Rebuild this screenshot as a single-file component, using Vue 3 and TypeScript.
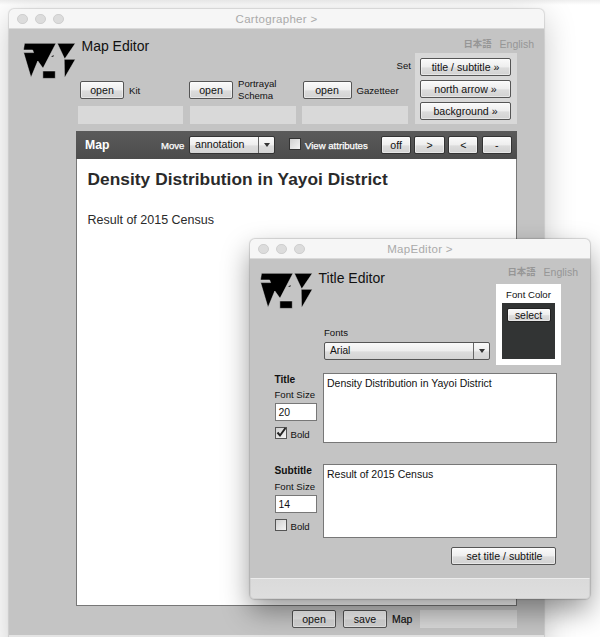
<script setup lang="ts">
import { ref } from 'vue'

interface Source {
  name: string
  lines: string[]
}

interface TextBlock {
  key: string
  heading: string
  size: string
  bold: boolean
  text: string
}

const sources: Source[] = [
  { name: 'kit', lines: ['Kit'] },
  { name: 'schema', lines: ['Portrayal', 'Schema'] },
  { name: 'gazetteer', lines: ['Gazetteer'] },
]
const setters: string[] = ['title / subtitle »', 'north arrow »', 'background »']
const zoomKeys: string[] = ['off', '>', '<', '-']

const blocks = ref<TextBlock[]>([
  { key: 'title', heading: 'Title', size: '20', bold: true, text: 'Density Distribution in Yayoi District' },
  { key: 'subtitle', heading: 'Subtitle', size: '14', bold: false, text: 'Result of 2015 Census' },
])
</script>

<template>
  <div class="desktop">
    <section class="window main-window">
      <header class="titlebar">
        <i class="dot"></i><i class="dot"></i><i class="dot"></i>
        <span class="window-name">Cartographer &gt;</span>
      </header>

      <div class="main-head">
        <svg class="logo" width="53" height="36" viewBox="0 0 53 36">
          <g stroke="#dcdcdc" stroke-width=".5">
            <path d="M1.5.3H33L20 25.3 14.8 18 8 34.5.6 9.6H10.6L9.6 7H.4Z" />
            <path d="M34.3.3H52.4L41.7 16Z" />
            <path d="M41.2 16.3H52.4L41.5 35Z" />
            <path d="M19.8 28H32.3V35.4H19.8Z" />
          </g>
          <path d="M28 14L30.5 12V13.5Z" />
        </svg>
        <div class="center">
          <div class="center-top">
            <h1>Map Editor</h1>
            <span class="set-label">Set</span>
          </div>
          <div class="sources">
            <div v-for="s in sources" :key="s.name" class="source" :class="s.name">
              <div class="source-row">
                <button class="btn open">open</button>
                <div class="label">
                  <div v-for="l in s.lines" :key="l">{{ l }}</div>
                </div>
              </div>
              <div class="field"></div>
            </div>
          </div>
        </div>
        <div class="side">
          <nav class="langs"><span class="ja">日本語</span><span>English</span></nav>
          <div class="setters">
            <button v-for="s in setters" :key="s" class="btn">{{ s }}</button>
          </div>
        </div>
      </div>

      <div class="map">
        <div class="toolbar">
          <strong>Map</strong>
          <span class="move">Move</span>
          <div class="select annotation">
            <span>annotation</span>
            <span class="arrow"></span>
          </div>
          <span class="check"></span>
          <span class="view">View attributes</span>
          <div class="keys">
            <button v-for="k in zoomKeys" :key="k" class="btn">{{ k }}</button>
          </div>
        </div>
        <div class="canvas">
          <h2>{{ blocks[0].text }}</h2>
          <p>{{ blocks[1].text }}</p>
        </div>
      </div>

      <div class="main-foot">
        <button class="btn">open</button>
        <button class="btn">save</button>
        <span>Map</span>
        <div class="field"></div>
      </div>
      <div class="grip"></div>
    </section>

    <section class="window dialog">
      <header class="titlebar">
        <i class="dot"></i><i class="dot"></i><i class="dot"></i>
        <span class="window-name">MapEditor &gt;</span>
      </header>

      <div class="dialog-head">
        <svg class="logo" width="53" height="36" viewBox="0 0 53 36">
          <g stroke="#dcdcdc" stroke-width=".5">
            <path d="M1.5.3H33L20 25.3 14.8 18 8 34.5.6 9.6H10.6L9.6 7H.4Z" />
            <path d="M34.3.3H52.4L41.7 16Z" />
            <path d="M41.2 16.3H52.4L41.5 35Z" />
            <path d="M19.8 28H32.3V35.4H19.8Z" />
          </g>
          <path d="M28 14L30.5 12V13.5Z" />
        </svg>
        <div class="dialog-center">
          <h1>Title Editor</h1>
          <div class="fonts-label">Fonts</div>
          <div class="select fonts">
            <span>Arial</span>
            <span class="arrow"></span>
          </div>
        </div>
        <div class="dialog-side">
          <nav class="langs"><span class="ja">日本語</span><span>English</span></nav>
          <div class="color-card">
            <span>Font Color</span>
            <div class="swatch"><button class="btn">select</button></div>
          </div>
        </div>
      </div>

      <div v-for="b in blocks" :key="b.key" class="block" :class="b.key">
        <div class="block-side">
          <strong>{{ b.heading }}</strong>
          <span class="size-label">Font Size</span>
          <div class="size">{{ b.size }}</div>
          <div class="bold-row" @click="b.bold = !b.bold">
            <span class="check">
              <svg v-if="b.bold" width="13" height="13" viewBox="0 0 13 13">
                <path d="M2.5 5.5L5 8.5 10.5 1" fill="none" stroke="#222" stroke-width="2" />
              </svg>
            </span>
            <span>Bold</span>
          </div>
        </div>
        <div class="area">{{ b.text }}</div>
      </div>

      <div class="dialog-actions"><button class="btn">set title / subtitle</button></div>
      <footer class="statusbar"></footer>
    </section>
  </div>
</template>

<style>
body {
  overflow: hidden;
}
</style>

<style scoped>
* {
  box-sizing: border-box;
}
.desktop {
  position: relative;
  width: 600px;
  height: 637px;
  overflow: hidden;
  background: linear-gradient(#eee, #fff 5px);
  font-family: 'Liberation Sans', 'Noto Sans CJK JP', sans-serif;
  font-size: 9.6px;
  color: #111;
}
.window {
  position: absolute;
  display: flex;
  flex-direction: column;
  background: #c4c4c4;
  border-radius: 5px;
}
.main-window {
  left: 9px;
  top: 9px;
  width: 535px;
  height: 640px;
  box-shadow: 0 0 1px 1px rgba(0, 0, 0, 0.11), 0 8px 32px rgba(0, 0, 0, 0.22);
}
.dialog {
  left: 250px;
  top: 239px;
  width: 340px;
  height: 360px;
  box-shadow: 0 0 1px 1px rgba(0, 0, 0, 0.14), 0 12px 28px rgba(0, 0, 0, 0.4);
}
.titlebar {
  display: flex;
  align-items: center;
  flex: none;
  height: 20px;
  padding: 1px 0 0 8px;
  gap: 7.5px;
  background: #f6f6f6;
  border-bottom: 1px solid #dadada;
  border-radius: 5px 5px 0 0;
}
.dot {
  width: 10.5px;
  height: 10.5px;
  border: 1px solid #cfcfcf;
  border-radius: 50%;
  background: #dcdcdc;
}
.window-name {
  flex: 1;
  padding-right: 62px;
  text-align: center;
  font-size: 11.5px;
  letter-spacing: 0.3px;
  color: #aaa;
}
h1 {
  margin: 0;
  font-size: 14px;
  font-weight: 400;
  line-height: 16px;
  color: #111;
}
.btn {
  display: flex;
  align-items: center;
  justify-content: center;
  flex: none;
  height: 18px;
  padding: 0;
  border: 1px solid #555;
  border-radius: 2px;
  background: linear-gradient(#fafafa, #eee 50%, #dcdcdc 55%, #d2d2d2);
  box-shadow: inset 0 0 0 1px rgba(255, 255, 255, 0.45);
  font: 10.6px/14px 'Liberation Sans', sans-serif;
  color: #111;
}
.field {
  height: 18px;
  background: #d9d9d9;
}
.logo {
  flex: none;
}
.langs {
  display: flex;
  align-items: center;
  gap: 8px;
  height: 12px;
  font-size: 10.5px;
  line-height: 12px;
  color: #969696;
}
.ja {
  font-size: 9.4px;
  font-weight: 700;
}

/* main window header */
.main-head {
  display: flex;
  height: 102px;
  padding-left: 14px;
  flex: none;
}
.main-head .logo {
  margin: 14px 2px 0 0;
}
.center {
  width: 330px;
}
.center-top {
  display: flex;
  justify-content: space-between;
  height: 52px;
}
.center-top h1 {
  margin: 9px 0 0 3.5px;
}
.set-label {
  margin: 31px -3px 0 0;
  line-height: 12px;
}
.sources {
  display: grid;
  grid-template-columns: 105px 106px 106px;
  column-gap: 6.5px;
}
.source-row {
  display: flex;
  align-items: center;
  height: 18px;
  margin-bottom: 7px;
  gap: 5px;
}
.open {
  width: 44px;
  margin-left: 2px;
}
.schema .open {
  margin-left: -0.5px;
}
.gazetteer .open {
  width: 49px;
  margin-left: 0.5px;
}
.label {
  line-height: 12px;
}
.kit .label,
.gazetteer .label {
  padding-top: 2px;
}
.side {
  display: flex;
  flex-direction: column;
  align-items: flex-end;
  width: 126px;
  padding-top: 9px;
}
.setters {
  display: flex;
  flex-direction: column;
  gap: 4px;
  width: 102px;
  height: 71px;
  margin: 3px 17px 0 0;
  padding: 5px;
  background: #d8d8d8;
}
.setters .btn {
  width: 91px;
}

/* map panel */
.map {
  display: flex;
  flex-direction: column;
  width: 441px;
  height: 475px;
  margin-left: 67px;
  flex: none;
  border: 1px solid #777;
  background: #fff;
}
.toolbar {
  display: flex;
  align-items: center;
  height: 28px;
  margin: -1px -1px 0;
  padding: 0 5px 0 9px;
  flex: none;
  background: linear-gradient(#5a5a5a, #4c4c4c);
  color: #fff;
}
.toolbar strong {
  width: 76px;
  font-size: 12.2px;
}
.move {
  width: 28px;
}
.move,
.view {
  -webkit-text-stroke: 0.25px #fff;
}
.select {
  display: flex;
  height: 18px;
  border: 1px solid #555;
  border-radius: 2px;
  background: linear-gradient(#fafafa, #eee 50%, #dcdcdc 55%, #d4d4d4);
  font-size: 10.6px;
  line-height: 15px;
  color: #111;
}
.select > span:first-child {
  flex: 1;
  padding-left: 5px;
}
.arrow {
  display: flex;
  align-items: center;
  justify-content: center;
  width: 16px;
  border-left: 1px solid #666;
}
.arrow::before {
  content: '';
  border: 3.5px solid transparent;
  border-top: 4px solid #333;
  border-bottom: 0;
}
.annotation {
  width: 86px;
  margin-right: 14px;
  border-color: #333;
}
.check {
  display: block;
  flex: none;
  width: 12px;
  height: 12px;
  border: 1px solid #555;
  background: linear-gradient(135deg, #d0d0d0, #f4f4f4);
}
.check svg {
  display: block;
  margin: -1px;
  overflow: visible;
}
.toolbar .check {
  margin: -2px 4px 0 0;
  border-color: #333;
}
.keys {
  display: flex;
  gap: 3.2px;
  margin-left: auto;
}
.keys .btn {
  width: 30.4px;
  border-color: #333;
}
.canvas {
  padding: 10px 10.5px;
  color: #2a2a2a;
}
.canvas h2 {
  margin: 0;
  font-size: 17.3px;
  line-height: 20px;
  letter-spacing: 0.05px;
  white-space: nowrap;
}
.canvas p {
  margin: 24px 0 0;
  font-size: 12.5px;
  line-height: 14px;
}
.main-foot {
  display: flex;
  align-items: center;
  height: 29px;
  padding: 0 27px 3px 283px;
  gap: 7px;
  flex: none;
  font-size: 10.4px;
}
.main-foot .btn {
  width: 44px;
}
.main-foot > span {
  width: 21px;
  margin-left: -2px;
  -webkit-text-stroke: 0.2px #111;
}
.main-foot .field {
  flex: 1;
}
.grip {
  flex: 1;
  background: #e4e4e4;
}

/* title editor dialog */
.dialog-head {
  display: flex;
  height: 114px;
  padding-left: 10px;
  flex: none;
}
.dialog-head .logo {
  margin-top: 14px;
}
.dialog-center {
  width: 177px;
}
.dialog-center h1 {
  margin: 11px 0 0 5.5px;
}
.fonts-label {
  margin: 41px 0 0 11px;
  line-height: 12px;
}
.fonts {
  width: 166px;
  margin: 3px 0 0 11px;
  line-height: 16px;
  font-size: 10.2px;
}
.dialog-side {
  display: flex;
  flex-direction: column;
  align-items: flex-end;
  width: 88px;
  padding-top: 7px;
}
.color-card {
  display: flex;
  flex-direction: column;
  align-items: center;
  width: 65px;
  height: 81px;
  margin: 6px 17px 0 0;
  padding-top: 5px;
  background: #fff;
  line-height: 12px;
}
.swatch {
  display: flex;
  justify-content: center;
  width: 53px;
  height: 56px;
  margin-top: 2px;
  padding-top: 5px;
  background: #323434;
}
.swatch .btn {
  width: 44px;
  height: 14px;
  padding-top: 1px;
  border-color: #222;
  font-size: 10.4px;
}
.block {
  display: flex;
  flex: none;
  padding-left: 24.5px;
}
.block.title {
  height: 91px;
}
.block.subtitle {
  height: 83px;
}
.block-side {
  display: flex;
  flex-direction: column;
  width: 48.5px;
}
.block-side strong {
  margin-top: 1px;
  font-size: 10.2px;
  line-height: 12px;
}
.size-label {
  margin-top: 3px;
  line-height: 12px;
}
.subtitle .size-label {
  margin-top: 4px;
}
.size {
  width: 42px;
  height: 18px;
  margin-top: 2px;
  padding-left: 3px;
  border: 1px solid #777;
  background: #fff;
  font-size: 10.4px;
  line-height: 17px;
}
.bold-row {
  display: flex;
  align-items: flex-start;
  margin-top: 6px;
  gap: 4px;
  line-height: 16px;
}
.area {
  width: 234px;
  height: 70px;
  padding: 2px 3px;
  border: 1px solid #777;
  background: #fff;
  font-size: 10.5px;
  line-height: 14px;
  white-space: nowrap;
}
.subtitle .area {
  height: 74px;
}
.dialog-actions {
  display: flex;
  justify-content: flex-end;
  height: 31px;
  padding-right: 34px;
  flex: none;
}
.dialog-actions .btn {
  width: 105px;
  padding-left: 2px;
}
.statusbar {
  flex: 1;
  border: 1px solid #d0d0d0;
  border-top-color: #ececec;
  border-radius: 0 0 4px 4px;
  background: linear-gradient(#dadada, #dedede);
}
</style>
